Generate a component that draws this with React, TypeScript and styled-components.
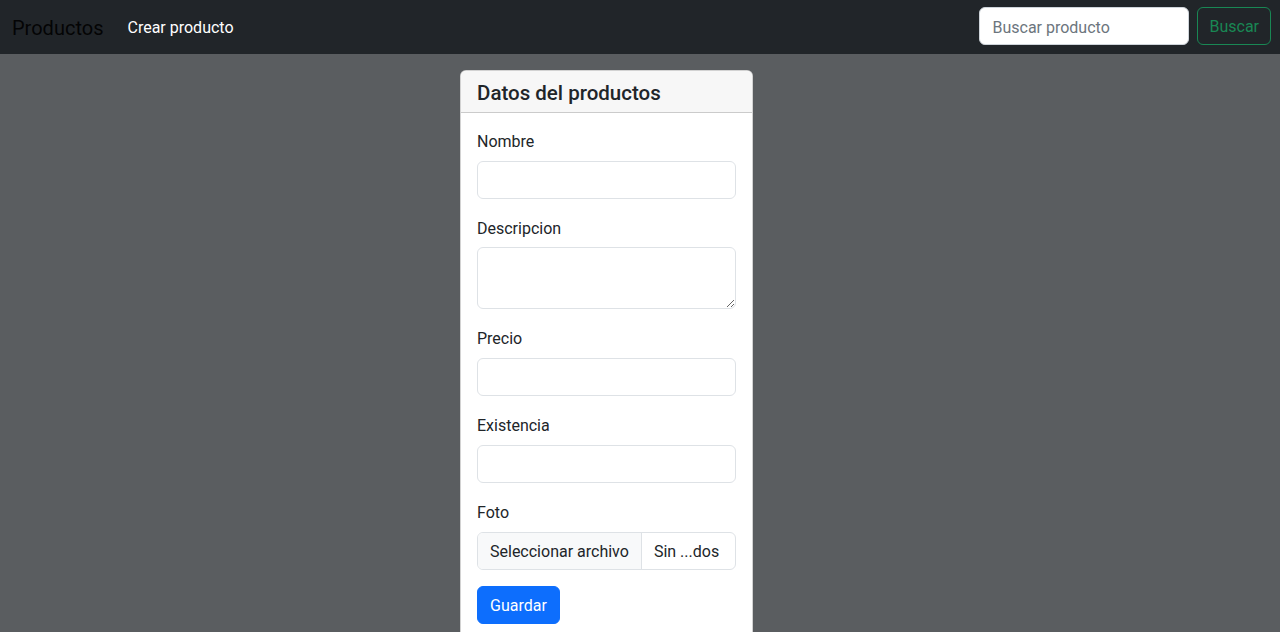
import React from "react";
import styled, { createGlobalStyle } from "styled-components";

const GlobalStyle = createGlobalStyle`
  html, body { margin: 0; padding: 0; }
  body {
    background: #5a5d60;
    font-family: Roboto, "Liberation Sans", Arial, sans-serif;
    font-size: 16px;
    line-height: 1.5;
    color: #212529;
    height: 632px;
    overflow: hidden;
  }
  *, *::before, *::after { box-sizing: border-box; }
`;

const Navbar = styled.nav`
  background: #212529;
  height: 54px;
  padding: 7px 9px 9px 12px;
  display: flex;
  align-items: center;
`;

const Brand = styled.a`
  font-size: 20px;
  color: rgba(0, 0, 0, 0.9);
  text-decoration: none;
  margin: 3px 16px 0 0;
  line-height: 30px;
  padding: 5px 0;
`;

const NavLink = styled.a`
  color: #ffffff;
  text-decoration: none;
  padding: 8px;
  margin-top: 3px;
`;

const SearchForm = styled.form`
  margin-left: auto;
  display: flex;
  align-items: center;
`;

const SearchInput = styled.input`
  width: 210px;
  height: 38px;
  margin-right: 8px;
  padding: 7px 12px 5px;
  font: inherit;
  color: #212529;
  background: #fff;
  border: 1px solid #ced4da;
  border-radius: 6px;
  outline: none;
  &::placeholder { color: #6c757d; }
`;

const OutlineButton = styled.button`
  height: 38px;
  padding: 7px 11px 5px;
  font: inherit;
  color: #198754;
  background: transparent;
  border: 1px solid #198754;
  border-radius: 6px;
`;

const Main = styled.main`
  display: flex;
  padding: 16px 0 0 460px;
`;

const Card = styled.section`
  width: 293px;
  background: #fff;
  border: 1px solid rgba(0, 0, 0, 0.175);
  border-radius: 6px;
  overflow: hidden;
`;

const CardHeader = styled.header`
  background: #f7f7f7;
  border-bottom: 1px solid rgba(0, 0, 0, 0.175);
  padding: 10px 16px 7px;
`;

const CardTitle = styled.h5`
  margin: 0;
  font-size: 20.5px;
  font-weight: 500;
  line-height: 24px;
`;

const CardBody = styled.div`
  padding: 15px 16px 16px;
`;

const Field = styled.div`
  margin-bottom: 16px;
`;

const Label = styled.label`
  display: block;
  line-height: 24.7px;
  padding-top: 2px;
  margin-bottom: 6px;
`;

const inputBase = `
  display: block;
  width: 100%;
  padding: 6px 12px;
  font: inherit;
  color: #212529;
  background: #fff;
  border: 1px solid #dee2e6;
  border-radius: 6px;
  outline: none;
`;

const TextInput = styled.input`
  ${inputBase}
  height: 38px;
`;

const TextArea = styled.textarea`
  ${inputBase}
  height: 62px;
  resize: vertical;
`;

const FileBox = styled.label`
  display: flex;
  height: 38px;
  border: 1px solid #dee2e6;
  border-radius: 6px;
  overflow: hidden;
  cursor: pointer;
  input { display: none; }
`;

const FileButton = styled.span`
  background: #f8f9fa;
  border-right: 1px solid #dee2e6;
  padding: 7px 12px 5px;
  white-space: nowrap;
`;

const FileName = styled.span`
  padding: 7px 12px 5px;
  white-space: nowrap;
`;

const PrimaryButton = styled.button`
  height: 38px;
  padding: 7px 12px 5px;
  font: inherit;
  color: #fff;
  background: #0d6efd;
  border: 1px solid #0d6efd;
  border-radius: 6px;
`;

export default function App() {
  return (
    <>
      <GlobalStyle />
      <Navbar>
        <Brand href="#">Productos</Brand>
        <NavLink href="#">Crear producto</NavLink>
        <SearchForm onSubmit={(e) => e.preventDefault()}>
          <SearchInput placeholder="Buscar producto" />
          <OutlineButton type="submit">Buscar</OutlineButton>
        </SearchForm>
      </Navbar>
      <Main>
        <Card>
          <CardHeader>
            <CardTitle>Datos del productos</CardTitle>
          </CardHeader>
          <CardBody>
            <Field>
              <Label>Nombre</Label>
              <TextInput />
            </Field>
            <Field>
              <Label>Descripcion</Label>
              <TextArea />
            </Field>
            <Field>
              <Label>Precio</Label>
              <TextInput />
            </Field>
            <Field>
              <Label>Existencia</Label>
              <TextInput />
            </Field>
            <Field>
              <Label>Foto</Label>
              <FileBox>
                <input type="file" />
                <FileButton>Seleccionar archivo</FileButton>
                <FileName>Sin ...dos</FileName>
              </FileBox>
            </Field>
            <PrimaryButton>Guardar</PrimaryButton>
          </CardBody>
        </Card>
      </Main>
    </>
  );
}
